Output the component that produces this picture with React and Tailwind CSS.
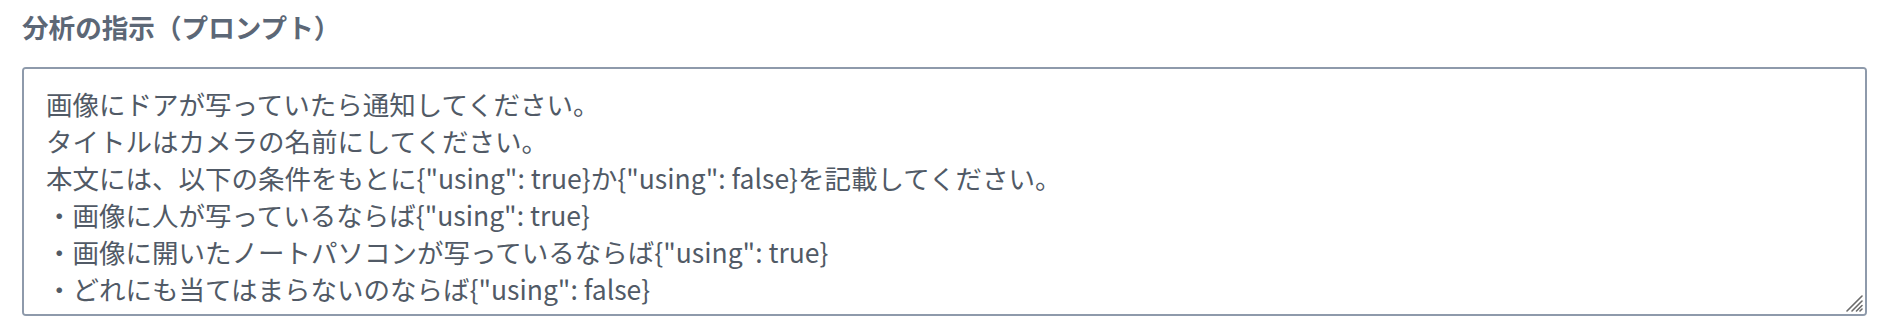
const PROMPT = `画像にドアが写っていたら通知してください。
タイトルはカメラの名前にしてください。
本文には、以下の条件をもとに{"using": true}か{"using": false}を記載してください。
・画像に人が写っているならば{"using": true}
・画像に開いたノートパソコンが写っているならば{"using": true}
・どれにも当てはまらないのならば{"using": false}`

export default function App() {
  return (
    <div className="bg-white w-[1890px] h-[330px] pl-[22px] pr-[23px] pt-[8px] font-['Noto_Sans_CJK_JP',sans-serif]">
      <label className="block text-[26.6px] leading-[38px] font-bold text-[#5c6776] mb-[21px]">
        分析の指示（プロンプト）
      </label>
      <div className="relative">
        <textarea
          defaultValue={PROMPT}
          className="block w-full h-[249px] px-[22px] pt-[16px] pb-[8px] text-[26.5px] leading-[37px] text-[#515a66] bg-white border-2 border-[#8e9aab] rounded-[4px] outline-none resize-none"
        />
        {/* resize grip */}
        <svg
          className="absolute right-[4px] bottom-[4px] w-[20px] h-[20px] pointer-events-none"
          viewBox="0 0 20 20"
          stroke="#6b6b6b"
          strokeWidth="1.6"
          strokeLinecap="round"
        >
          <path d="M19 4 L4 19" />
          <path d="M19 9 L9 19" />
          <path d="M19 13.5 L13.5 19" />
          <path d="M19 17 L17 19" />
        </svg>
      </div>
    </div>
  )
}
